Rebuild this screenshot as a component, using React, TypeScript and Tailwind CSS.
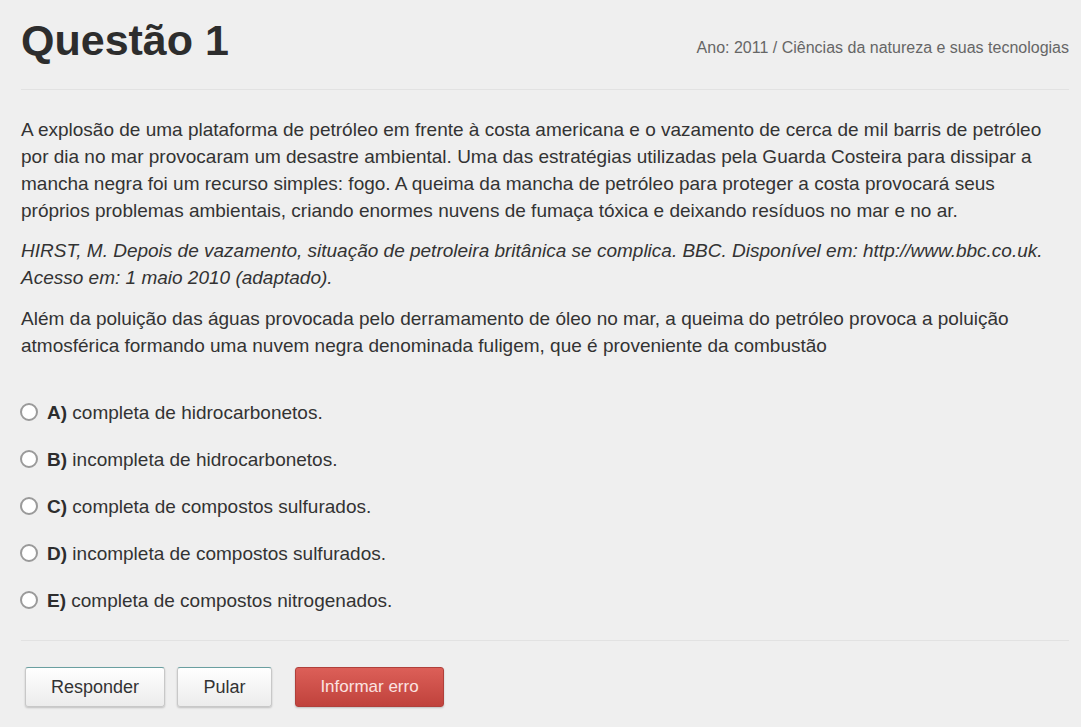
import React from 'react';

const options = [
  { letter: 'A)', text: 'completa de hidrocarbonetos.' },
  { letter: 'B)', text: 'incompleta de hidrocarbonetos.' },
  { letter: 'C)', text: 'completa de compostos sulfurados.' },
  { letter: 'D)', text: 'incompleta de compostos sulfurados.' },
  { letter: 'E)', text: 'completa de compostos nitrogenados.' },
];

export default function App() {
  return (
    <div
      className="min-h-[727px] bg-[#efefef] text-[#333] pl-[21px] pr-[12px]"
      style={{ fontFamily: '"Liberation Sans", Arial, sans-serif' }}
    >
      <div className="flex items-end justify-between pt-[14px] pb-[23px] border-b border-[#e2e2e2]">
        <h1 className="text-[43px] leading-[52px] font-bold text-[#2d2d2d]">Questão 1</h1>
        <span className="text-[16px] text-[#666] mb-[6px]">
          Ano: 2011 / Ciências da natureza e suas tecnologias
        </span>
      </div>

      <div className="pt-[26px] text-[19px] leading-[27px]">
        <p>
          A explosão de uma plataforma de petróleo em frente à costa americana e o vazamento de cerca de mil barris de petróleo<br />
          por dia no mar provocaram um desastre ambiental. Uma das estratégias utilizadas pela Guarda Costeira para dissipar a<br />
          mancha negra foi um recurso simples: fogo. A queima da mancha de petróleo para proteger a costa provocará seus<br />
          próprios problemas ambientais, criando enormes nuvens de fumaça tóxica e deixando resíduos no mar e no ar.
        </p>
        <p className="italic mt-[13px]">
          HIRST, M. Depois de vazamento, situação de petroleira britânica se complica. BBC. Disponível em: http://www.bbc.co.uk.<br />
          Acesso em: 1 maio 2010 (adaptado).
        </p>
        <p className="mt-[14px]">
          Além da poluição das águas provocada pelo derramamento de óleo no mar, a queima do petróleo provoca a poluição<br />
          atmosférica formando uma nuvem negra denominada fuligem, que é proveniente da combustão
        </p>
      </div>

      <div className="pt-[40px] pb-[26px] border-b border-[#e2e2e2] flex flex-col gap-[20px] text-[19px] leading-[27px]">
        {options.map((o) => (
          <label key={o.letter} className="flex items-center gap-[9px]">
            <span className="w-[18px] h-[18px] rounded-full border-2 border-[#9a9a9a] bg-white shrink-0 -mt-[2px] -ml-[1px]" />
            <span>
              <b className="text-[#2d2d2d]">{o.letter}</b> {o.text}
            </span>
          </label>
        ))}
      </div>

      <div className="flex items-center pt-[26px] pl-[4px]">
        <button className="w-[140px] h-[40px] rounded-[3px] border border-[#c8c8c8] border-t-[#6a9fa0] bg-gradient-to-b from-white to-[#ececec] shadow-[0_1px_2px_rgba(0,0,0,0.2)] text-[18px] text-[#333]">
          Responder
        </button>
        <button className="ml-[12px] w-[95px] h-[40px] rounded-[3px] border border-[#c8c8c8] border-t-[#6a9fa0] bg-gradient-to-b from-white to-[#ececec] shadow-[0_1px_2px_rgba(0,0,0,0.2)] text-[18px] text-[#333]">
          Pular
        </button>
        <button className="ml-[23px] w-[149px] h-[40px] rounded-[3px] border border-[#b0403b] bg-gradient-to-b from-[#dc5f58] to-[#c0423c] shadow-[0_1px_2px_rgba(0,0,0,0.2)] text-[17px] text-[#fbe3e1]">
          Informar erro
        </button>
      </div>
    </div>
  );
}
